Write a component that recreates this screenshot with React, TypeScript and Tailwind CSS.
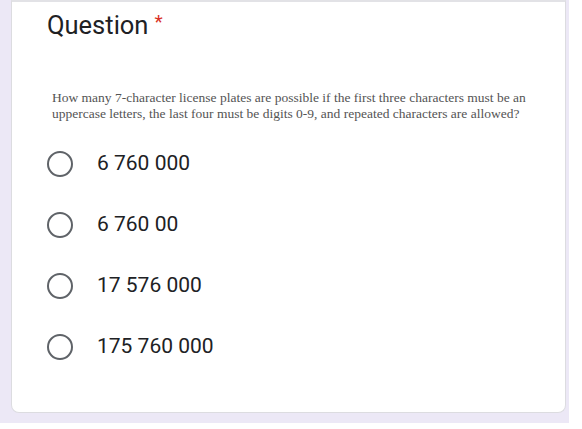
import React from "react";

const OPTIONS = ["6 760 000", "6 760 00", "17 576 000", "175 760 000"];

export default function App() {
  return (
    <div className="w-[582px] h-[429px] bg-white">
      <div className="w-[569px] h-[423px] bg-[#ece8f6] pl-[11px] pr-[3px] pb-[10px]">
        <div className="h-full bg-white rounded-b-lg border border-t-2 border-[#dcdce0] border-t-[#e2e2e6] pl-[35px] pt-[7px]">
          <div className="flex items-start font-['Roboto',sans-serif] text-[25.5px] leading-[32px] text-[#202124]">
            <span>Question</span>
            <span className="ml-[6px] text-[19px] leading-[26px] text-[#d93025]">*</span>
          </div>

          <p className="mt-[49px] pl-[5px] pr-[20px] font-['Liberation_Serif',serif] text-[13.5px] leading-[16px] text-[#545454]">
            How many 7-character license plates are possible if the first three characters must be an
            uppercase letters, the last four must be digits 0-9, and repeated characters are allowed?
          </p>

          <div className="mt-[11px] flex flex-col">
            {OPTIONS.map((opt) => (
              <div key={opt} className="h-[61px] flex items-center">
                <span className="w-[26px] h-[26px] rounded-full border-[2.5px] border-[#5f6368] shrink-0" />
                <span className="ml-[24px] font-['Roboto',sans-serif] text-[21px] text-[#202124]">
                  {opt}
                </span>
              </div>
            ))}
          </div>
        </div>
      </div>
    </div>
  );
}
